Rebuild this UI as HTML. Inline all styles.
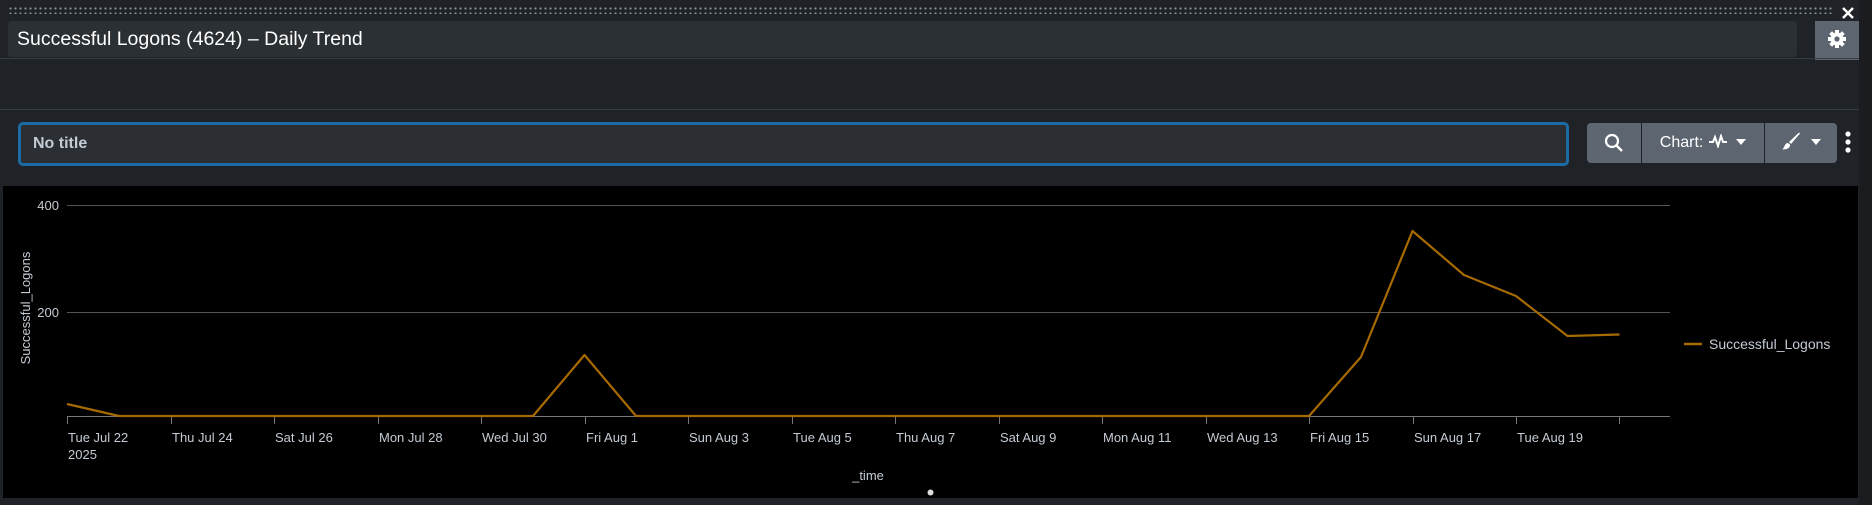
<!DOCTYPE html>
<html><head><meta charset="utf-8"><style>
*{margin:0;padding:0;box-sizing:border-box}
body{width:1872px;height:505px;background:#1f2226;overflow:hidden;position:relative;font-family:"Liberation Sans",sans-serif}
.dots{position:absolute;left:8px;top:6px;width:1825px;height:8px;background-image:radial-gradient(circle,#8d959d 0.9px,transparent 1.2px);background-size:5px 5px;background-position:0 0}
.title{position:absolute;left:8px;top:21px;width:1789px;height:36px;background:#2b3034;border-radius:3px;color:#fff;font-size:19.5px;line-height:36px;padding-left:9px}
.hl{position:absolute;left:0;width:1859px;height:1px;background:#353c44}
.gear{position:absolute;left:1815px;top:21px;width:44px;height:39px;background:#5c6570}
.strip{position:absolute;left:1859px;top:0;width:13px;height:505px;background:#1a1c1f}
.inp{position:absolute;left:18px;top:122px;width:1551px;height:44px;border:3px solid #1b6ba5;border-radius:5px;background:#2b2f33;color:#c3cbd4;font-weight:bold;font-size:16px;line-height:38px;padding-left:12px}
.btn{position:absolute;top:123px;height:40px;background:#5c6570;color:#fff;font-size:16px;line-height:40px;text-align:center}
.chart{position:absolute;left:3px;top:186px;width:1855px;height:312px;background:#000}
</style></head><body>
<div class="strip"></div>
<div class="dots"></div>
<svg style="position:absolute;left:1841px;top:6px" width="14" height="14"><path d="M2 2L12 12M12 2L2 12" stroke="#fff" stroke-width="2.4"/></svg>
<div class="title">Successful Logons (4624) – Daily Trend</div>
<div class="gear"><svg width="44" height="39" viewBox="0 0 44 39"><g transform="translate(22 18)" fill="#fff"><circle r="6.5"/><rect x="-2" y="-9" width="4" height="18"/><rect x="-2" y="-9" width="4" height="18" transform="rotate(45)"/><rect x="-2" y="-9" width="4" height="18" transform="rotate(90)"/><rect x="-2" y="-9" width="4" height="18" transform="rotate(135)"/><circle r="2.6" fill="#5c6570"/></g></svg></div>
<div class="hl" style="top:58px"></div>
<div class="hl" style="top:109px"></div>
<div class="inp">No title</div>
<div class="btn" style="left:1587px;width:54px;border-radius:4px 0 0 4px"><svg width="20" height="20" viewBox="0 0 20 20" style="margin-top:10px"><circle cx="8" cy="8" r="6" fill="none" stroke="#fff" stroke-width="2.2"/><path d="M12.5 12.5L18 18" stroke="#fff" stroke-width="2.4"/></svg></div>
<div class="btn" style="left:1642px;width:122px">Chart: <svg width="20" height="14" viewBox="0 0 20 14" style="vertical-align:-1px"><path d="M1 8H5L7 3L10 12L13 2L15 8H19" fill="none" stroke="#fff" stroke-width="2"/></svg> <svg width="10" height="6" style="margin-left:4px;vertical-align:2px"><path d="M0 0H10L5 6Z" fill="#fff"/></svg></div>
<div class="btn" style="left:1765px;width:72px;border-radius:0 4px 4px 0"><svg width="20" height="20" viewBox="0 0 20 20" style="vertical-align:-4px"><path d="M18 1.5L19 2.5L10 13L8 11Z" fill="#fff"/><path d="M7 12C4 12 4 15 1.5 18.5C6 18.5 9.5 17 9 13.5Z" fill="#fff"/></svg> <svg width="10" height="6" style="margin-left:6px;vertical-align:2px"><path d="M0 0H10L5 6Z" fill="#fff"/></svg></div>
<svg style="position:absolute;left:1844px;top:130px" width="8" height="26"><circle cx="4" cy="4" r="2.6" fill="#fff"/><circle cx="4" cy="12" r="2.6" fill="#fff"/><circle cx="4" cy="20" r="2.6" fill="#fff"/></svg>
<div class="chart"></div>
<svg style="position:absolute;left:0;top:0" width="1872" height="505" font-family="Liberation Sans, sans-serif" font-size="13" fill="#c3cbd4">
<line x1="67" y1="205.5" x2="1670" y2="205.5" stroke="#555" stroke-width="1"/>
<line x1="67" y1="312.5" x2="1670" y2="312.5" stroke="#555" stroke-width="1"/>
<line x1="67" y1="416.5" x2="1670" y2="416.5" stroke="#777" stroke-width="1"/>
<text x="59" y="210" text-anchor="end">400</text>
<text x="59" y="317" text-anchor="end">200</text>
<text transform="translate(30 308) rotate(-90)" text-anchor="middle">Successful_Logons</text>
<g stroke="#777">
<line x1="67.5" y1="416" x2="67.5" y2="424"/><line x1="171.5" y1="416" x2="171.5" y2="424"/><line x1="274.5" y1="416" x2="274.5" y2="424"/><line x1="378.5" y1="416" x2="378.5" y2="424"/><line x1="481.5" y1="416" x2="481.5" y2="424"/><line x1="585.5" y1="416" x2="585.5" y2="424"/><line x1="688.5" y1="416" x2="688.5" y2="424"/><line x1="792.5" y1="416" x2="792.5" y2="424"/><line x1="895.5" y1="416" x2="895.5" y2="424"/><line x1="999.5" y1="416" x2="999.5" y2="424"/><line x1="1102.5" y1="416" x2="1102.5" y2="424"/><line x1="1206.5" y1="416" x2="1206.5" y2="424"/><line x1="1309.5" y1="416" x2="1309.5" y2="424"/><line x1="1413.5" y1="416" x2="1413.5" y2="424"/><line x1="1516.5" y1="416" x2="1516.5" y2="424"/><line x1="1619.5" y1="416" x2="1619.5" y2="424"/>
</g>
<g>
<text x="68" y="442">Tue Jul 22</text><text x="68" y="459">2025</text>
<text x="172" y="442">Thu Jul 24</text><text x="275" y="442">Sat Jul 26</text><text x="379" y="442">Mon Jul 28</text><text x="482" y="442">Wed Jul 30</text><text x="586" y="442">Fri Aug 1</text><text x="689" y="442">Sun Aug 3</text><text x="793" y="442">Tue Aug 5</text><text x="896" y="442">Thu Aug 7</text><text x="1000" y="442">Sat Aug 9</text><text x="1103" y="442">Mon Aug 11</text><text x="1207" y="442">Wed Aug 13</text><text x="1310" y="442">Fri Aug 15</text><text x="1414" y="442">Sun Aug 17</text><text x="1517" y="442">Tue Aug 19</text>
</g>
<text x="868" y="480" text-anchor="middle">_time</text>
<circle cx="930.5" cy="492.5" r="3" fill="#ddd"/>
<polyline fill="none" stroke="#a66a00" stroke-width="2.2" stroke-linejoin="round" points="67,404 119,416 533,416 584.5,355 636,416 1309,416 1361,357 1412.5,231 1464,275 1516,296 1567.5,336 1619.5,334.5"/>
<line x1="1684" y1="344" x2="1702" y2="344" stroke="#a66a00" stroke-width="2.5"/>
<text x="1709" y="349" font-size="14">Successful_Logons</text>
</svg>
</body></html>
